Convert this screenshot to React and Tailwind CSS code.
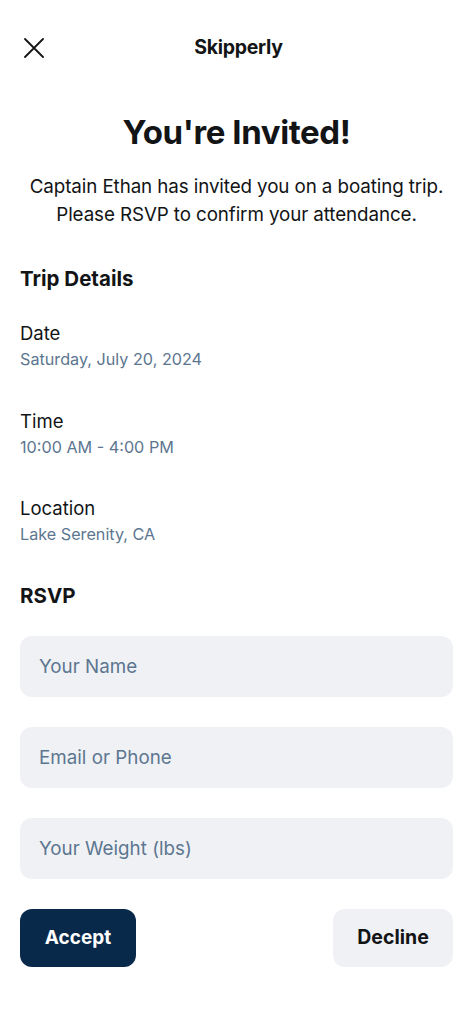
import React from 'react';

export default function App() {
  const details = [
    { label: 'Date', value: 'Saturday, July 20, 2024' },
    { label: 'Time', value: '10:00 AM - 4:00 PM' },
    { label: 'Location', value: 'Lake Serenity, CA' },
  ];
  const fields = ['Your Name', 'Email or Phone', 'Your Weight (lbs)'];

  return (
    <div className="min-h-screen bg-white text-[#121416] font-['Inter',sans-serif]">
      <div className="flex items-center pl-[24px] pr-5 pt-[31px] h-[65px]">
        <svg className="w-5 h-5" fill="none" stroke="currentColor" viewBox="0 0 20 20">
          <path strokeLinecap="round" strokeWidth="1.8" d="M1 1l18 18M19 1L1 19" />
        </svg>
        <h1 className="flex-1 text-center text-[19.5px] font-bold pr-[20px] tracking-[-0.3px]">Skipperly</h1>
      </div>

      <h2 className="text-center text-[33px] font-bold mt-[47px] leading-10 tracking-[-0.4px]">You're Invited!</h2>
      <p className="text-center text-[18.8px] leading-7 mt-[21px] px-2 tracking-[-0.1px]">
        Captain Ethan has invited you on a boating trip.
        <br />
        Please RSVP to confirm your attendance.
      </p>

      <div className="px-5">
        <h3 className="text-[20.5px] font-bold mt-[36px] leading-7">Trip Details</h3>
        <div className="mt-[28px] flex flex-col gap-[39.5px]">
          {details.map(d => (
            <div key={d.label}>
              <div className="text-[18.5px] leading-6">{d.label}</div>
              <div className="text-[16.2px] leading-5 text-[#5d7690] mt-[4px]">{d.value}</div>
            </div>
          ))}
        </div>

        <h3 className="text-[20.5px] font-bold mt-[38px] leading-7">RSVP</h3>
        <div className="mt-[26px] flex flex-col gap-[30px]">
          {fields.map(f => (
            <input
              key={f}
              placeholder={f}
              className="h-[61px] w-full rounded-xl bg-[#eff1f5] px-[19px] text-[18.8px] placeholder:text-[#5d7690] outline-none"
            />
          ))}
        </div>

        <div className="mt-[30px] flex justify-between">
          <button className="h-[58px] w-[116px] rounded-xl bg-[#08294a] text-white text-[19px] font-bold">Accept</button>
          <button className="h-[58px] w-[120px] rounded-xl bg-[#eff1f5] text-[#121416] text-[19.5px] font-bold">Decline</button>
        </div>
      </div>
    </div>
  );
}
